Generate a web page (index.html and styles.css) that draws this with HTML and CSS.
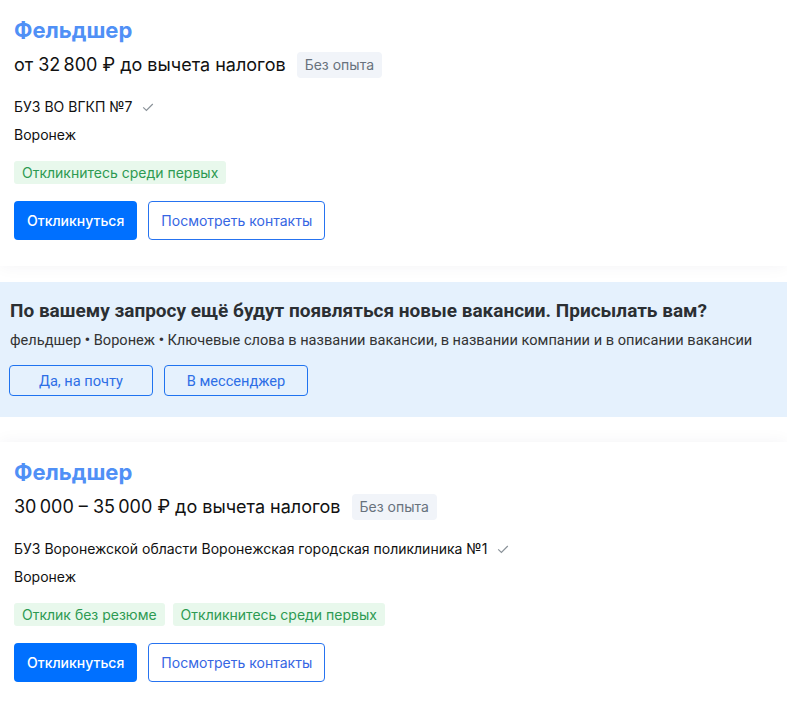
FILE: index.html
```html
<!DOCTYPE html>
<html lang="ru">
<head>
<meta charset="utf-8">
<title>Вакансии</title>
<link rel="stylesheet" href="styles.css">
</head>
<body>
<div class="list">
  <div class="card">
    <div class="title">Фельдшер</div>
    <div class="salary-row">
      <span class="salary">от 32&#8239;800 ₽ до вычета налогов</span>
      <span class="exp">Без опыта</span>
    </div>
    <div class="company">БУЗ ВО ВГКП №7
      <svg class="check" width="14" height="14" viewBox="0 0 14 14"><path d="M2.2 7.4 L5.4 10.4 L11.8 4" fill="none" stroke="#8a9299" stroke-width="1.2"/></svg>
    </div>
    <div class="city">Воронеж</div>
    <div class="tags">
      <span class="tag">Откликнитесь среди первых</span>
    </div>
    <div class="actions">
      <button class="btn-primary">Откликнуться</button>
      <button class="btn-outline">Посмотреть контакты</button>
    </div>
  </div>

  <div class="subscribe">
    <div class="sub-title">По вашему запросу ещё будут появляться новые вакансии. Присылать вам?</div>
    <div class="sub-text">фельдшер <b class="dot">•</b> Воронеж <b class="dot">•</b> Ключевые слова в названии вакансии, в названии компании и в описании вакансии</div>
    <div class="sub-actions">
      <button class="btn-sub">Да, на почту</button>
      <button class="btn-sub">В мессенджер</button>
    </div>
  </div>

  <div class="card">
    <div class="title">Фельдшер</div>
    <div class="salary-row">
      <span class="salary">30&#8239;000 – 35&#8239;000 ₽ до вычета налогов</span>
      <span class="exp">Без опыта</span>
    </div>
    <div class="company">БУЗ Воронежской области Воронежская городская поликлиника №1
      <svg class="check" width="14" height="14" viewBox="0 0 14 14"><path d="M2.2 7.4 L5.4 10.4 L11.8 4" fill="none" stroke="#8a9299" stroke-width="1.2"/></svg>
    </div>
    <div class="city">Воронеж</div>
    <div class="tags">
      <span class="tag">Отклик без резюме</span>
      <span class="tag">Откликнитесь среди первых</span>
    </div>
    <div class="actions">
      <button class="btn-primary">Откликнуться</button>
      <button class="btn-outline">Посмотреть контакты</button>
    </div>
  </div>
</div>
</body>
</html>
```
FILE: styles.css
```css
* { box-sizing: border-box; }
html, body { margin: 0; padding: 0; background: #ffffff; }
body { font-family: Inter, "Noto Sans", sans-serif; color: #111; overflow: hidden; }

.list { display: flex; flex-direction: column; }

.card {
  background: #fff;
  padding: 16px 14px 26px;
  box-shadow: 0 0 16px rgba(20, 40, 80, 0.05);
  display: flex;
  flex-direction: column;
  align-items: flex-start;
}
.card + .subscribe { margin-top: 16px; }
.subscribe + .card { margin-top: 25px; }

.title {
  font-size: 22px;
  font-weight: 700;
  line-height: 28px;
  color: #5090f6;
}
.salary-row {
  margin-top: 8px;
  display: flex;
  align-items: center;
  gap: 11px;
  height: 26px;
}
.salary { font-size: 18px; line-height: 26px; color: #111; }
.exp {
  background: #f1f4f9;
  color: #68727d;
  font-size: 14px;
  line-height: 26px;
  padding: 0 8px;
  border-radius: 4px;
}
.company {
  margin-top: 19px;
  font-size: 14px;
  line-height: 20px;
  display: flex;
  align-items: center;
  gap: 9px;
  color: #111;
}
.check { display: block; }
.city { margin-top: 8px; font-size: 14px; line-height: 20px; color: #111; }
.tags { margin-top: 16px; display: flex; gap: 8px; }
.tag {
  background: #e8f8ec;
  color: #2d9a52;
  font-size: 14px;
  line-height: 23px;
  padding: 0 8px;
  border-radius: 3px;
}
.actions { margin-top: 17px; display: flex; gap: 11px; }
.btn-primary, .btn-outline, .btn-sub {
  font-family: Inter, "Noto Sans", sans-serif;
  font-size: 14px;
  border-radius: 4px;
  cursor: pointer;
}
.btn-primary {
  height: 39px;
  padding: 0 13px;
  background: #0070ff;
  color: #fff;
  border: none;
  font-weight: 500;
}
.btn-outline {
  height: 39px;
  padding: 0 12px;
  background: #fff;
  color: #3666e3;
  border: 1px solid #2673f0;
}

.subscribe {
  background: #e5f1fd;
  padding: 18px 9px 21px;
  font-family: Roboto, "Liberation Sans", sans-serif;
}
.sub-title {
  padding-left: 1px;
  font-size: 19px;
  font-weight: 700;
  line-height: 22px;
  color: #2b2f33;
}
.sub-text {
  padding-left: 1px;
  margin-top: 8px;
  font-size: 14.6px;
  line-height: 20px;
  color: #333;
}
.dot { font-weight: 700; }
.sub-actions { margin-top: 15px; display: flex; gap: 11px; }
.btn-sub {
  font-family: Roboto, "Liberation Sans", sans-serif;
  font-size: 14.6px;
  width: 144px;
  height: 31px;
  background: transparent;
  color: #2d6ee6;
  border: 1px solid #1f73f0;
}
```
